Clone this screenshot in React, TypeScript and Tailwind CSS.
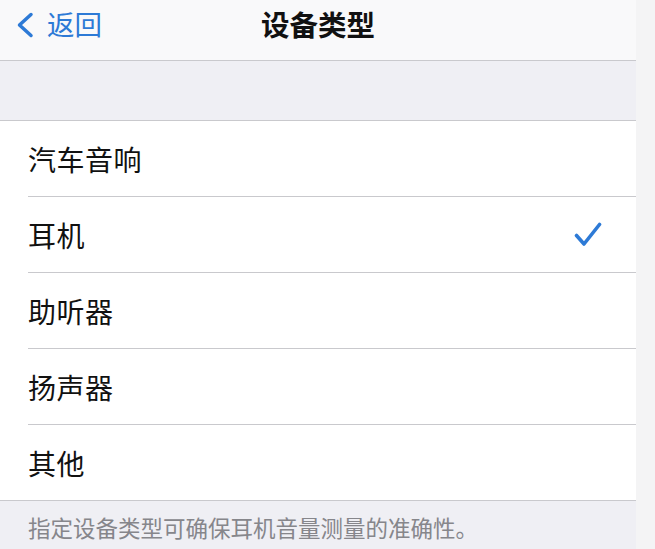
import React from 'react';

const items = ['汽车音响', '耳机', '助听器', '扬声器', '其他'];
const selected = 1;

const font = { fontFamily: '"Noto Sans CJK SC", "Noto Sans", sans-serif' };

export default function App() {
  return (
    <div className="flex w-[655px] h-[549px] bg-[#f4f4f5] overflow-hidden" style={font}>
      <div className="w-[636px] flex flex-col bg-[#efeff4]">
        {/* nav bar */}
        <div className="relative h-[61px] shrink-0 bg-[#f9f9fa] border-b border-[#c9c9cd] flex items-center">
          <div className="flex items-center pl-[15px] text-[#2d7ad6]">
            <svg width="19" height="26" viewBox="0 0 19 26" fill="none" className="-mt-[10px]">
              <path d="M16 2.5L4.5 13L16 23.5" stroke="currentColor" strokeWidth="3.5" strokeLinecap="round" strokeLinejoin="round" />
            </svg>
            <span className="ml-[13px] -mt-[12px] text-[27.5px] leading-none">返回</span>
          </div>
          <div className="absolute left-[261px] top-[6px] text-[28.5px] font-semibold leading-[36px] text-[#111]">设备类型</div>
        </div>

        <div className="h-[59px] shrink-0" />

        {/* list */}
        <div className="bg-white border-t border-b border-[#c9c9cd]">
          {items.map((item, i) => (
            <div key={item} className="pl-[28px]">
              <div className={`h-[75px] flex items-center justify-between pr-[34px] ${i < items.length - 1 ? 'border-b border-[#c9c9cd] h-[76px]' : ''}`}>
                <span className="text-[28px] leading-none text-[#111] tracking-[0.5px]">{item}</span>
                {i === selected && (
                  <svg width="28" height="25" viewBox="0 0 28 25" fill="none">
                    <path d="M2.5 13.5L10 22L25.5 2.5" stroke="#2d7ad6" strokeWidth="3.6" strokeLinecap="round" strokeLinejoin="round" />
                  </svg>
                )}
              </div>
            </div>
          ))}
        </div>

        {/* footer */}
        <div className="pl-[28px] pt-[11px] text-[22.5px] leading-[30px] text-[#86868b]">
          指定设备类型可确保耳机音量测量的准确性。
        </div>
      </div>
    </div>
  );
}
